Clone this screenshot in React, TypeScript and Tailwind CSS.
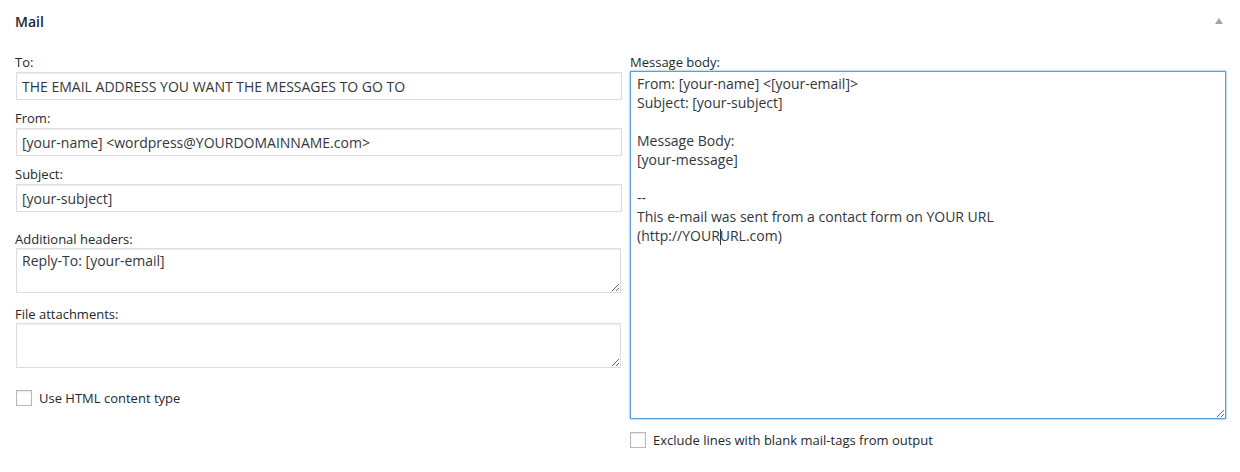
import React from 'react';

const body = `From: [your-name] <[your-email]>
Subject: [your-subject]

Message Body:
[your-message]

-- 
This e-mail was sent from a contact form on YOUR URL
(http://YOURURL.com)`;

function Label({ children, className = '' }: { children: React.ReactNode; className?: string }) {
  return <label className={`block text-[13px] leading-[18px] text-[#23282d] ${className}`}>{children}</label>;
}

function TextInput({ value }: { value: string }) {
  return (
    <input
      type="text"
      readOnly
      value={value}
      className="mt-[1px] ml-[1px] block h-[28px] w-[606px] border border-[#ddd] bg-white px-[5px] text-[14px] text-[#32373c] shadow-[inset_0_1px_2px_rgba(0,0,0,0.07)] outline-none"
    />
  );
}

function SmallArea({ value }: { value: string }) {
  return (
    <textarea
      readOnly
      defaultValue={value}
      className="ml-[1px] block h-[45px] w-[605px] border border-[#ddd] bg-white px-[5px] pt-[2px] text-[14px] leading-[19px] text-[#32373c] shadow-[inset_0_1px_2px_rgba(0,0,0,0.07)] outline-none"
    />
  );
}

function Check({ label }: { label: string }) {
  return (
    <label className="flex items-center gap-[7px] text-[13px] text-[#23282d]">
      <input
        type="checkbox"
        className="m-0 h-[16px] w-[16px] appearance-none border border-[#b4b9be] bg-white shadow-[inset_0_1px_2px_rgba(0,0,0,0.1)]"
      />
      <span className="leading-[18px]">{label}</span>
    </label>
  );
}

export default function App() {
  return (
    <div className="h-[472px] w-[1240px] overflow-hidden bg-white font-['Open_Sans',sans-serif]">
      <div className="flex items-center justify-between pl-[15px] pr-[17px] pt-[12px]">
        <h2 className="text-[14px] font-semibold leading-[20px] text-[#23282d]">Mail</h2>
        <svg width="8" height="6" viewBox="0 0 8 6" className="mt-[-3px]">
          <polygon points="4,0 8,6 0,6" fill="#a0a5aa" />
        </svg>
      </div>

      <div className="mt-[21px] flex gap-[7px] pl-[15px]">
        <div className="w-[608px]">
          <Label>To:</Label>
          <TextInput value="THE EMAIL ADDRESS YOU WANT THE MESSAGES TO GO TO" />
          <Label className="mt-[9px]">From:</Label>
          <TextInput value="[your-name] <wordpress@YOURDOMAINNAME.com>" />
          <Label className="mt-[9px]">Subject:</Label>
          <TextInput value="[your-subject]" />
          <Label className="mt-[18px]">Additional headers:</Label>
          <SmallArea value="Reply-To: [your-email]" />
          <Label className="mt-[12px]">File attachments:</Label>
          <SmallArea value="" />
          <div className="mt-[21px] ml-[1px]">
            <Check label="Use HTML content type" />
          </div>
        </div>

        <div className="w-[596px]">
          <Label>Message body:</Label>
          <div className="relative">
            <textarea
              readOnly
              defaultValue={body}
              className="block h-[348px] w-[596px] border border-[#5b9dd9] bg-white px-[6px] pt-[2px] text-[14px] leading-[19px] text-[#32373c] shadow-[0_0_2px_rgba(30,140,190,0.8)] outline-none"
            />
            {/* text caret */}
            <span className="pointer-events-none absolute left-[90px] top-[158px] h-[16px] w-px bg-[#32373c]" />
          </div>
          <div className="mt-[12px]">
            <Check label="Exclude lines with blank mail-tags from output" />
          </div>
        </div>
      </div>
    </div>
  );
}
